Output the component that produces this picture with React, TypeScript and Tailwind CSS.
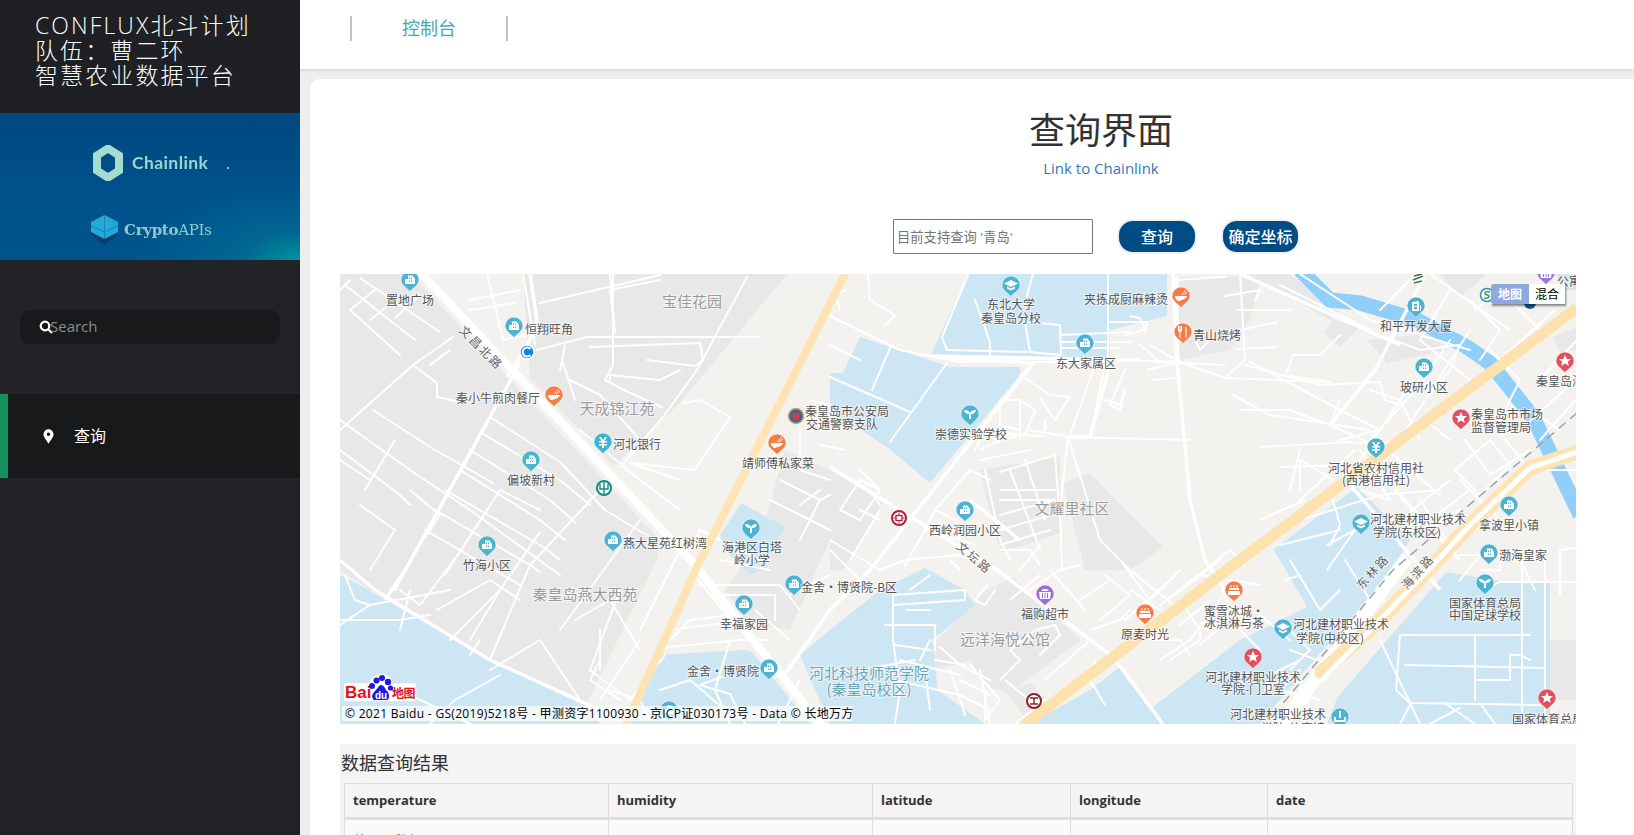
import React from "react";

const CJK = '"Open Sans","Noto Sans CJK SC",sans-serif';

const blocks: string[] = [
  "340,274 415,274 660,540 657,560 587,703 490,658 370,590 340,570",
  "523,274 787,274 680,403 613,467 530,380",
  "1177,277 1260,277 1250,320 1230,350 1180,360",
  "980,470 1060,457 1060,533 1000,553",
  "1063,483 1090,473 1163,547 1130,570 1085,570",
  "830,470 883,503 843,570 830,570",
  "785,450 830,470 830,540 790,630 735,620 725,590 760,540",
  "937,670 930,647 987,590 1013,577 1080,640 1010,693 987,687 970,660",
  "1007,693 1030,682 1047,703 1027,720",
  "1440,274 1487,274 1460,297",
  "1367,340 1433,333 1447,350 1387,363",
  "1323,333 1333,320 1360,327 1340,347",
  "1553,337 1577,327 1577,350 1560,353",
  "1247,274 1290,274 1340,312 1330,320",
  "1490,600 1530,595 1530,610 1490,612",
  "1550,640 1576,640 1576,700 1550,700",
];

const water: string[] = [
  "340,575 360,585 490,660 590,708 600,724 340,724",
  "630,724 658,655 745,650 770,655 800,690 825,724",
  "800,655 830,630 880,590 925,568 965,590 975,605 932,640 938,690 985,724 830,724",
  "968,274 1167,274 1167,316 1110,330 1110,360 1030,358 930,357",
  "860,337 950,367 1020,367 1020,375 930,483 887,447 830,410 830,373 843,373",
  "720,535 741,503 785,527 760,570 750,575 725,550",
  "1030,724 1090,690 1120,667 1160,724",
  "1273,550 1357,487 1410,540 1380,590 1320,680 1260,724 1130,724 1153,707 1240,640 1307,607 1280,560",
  "1433,570 1513,583 1550,583 1550,724 1327,724 1353,657",
  "1557,274 1577,274 1577,290 1560,290",
];

const thin: string[] = [
  "968,275 942,337 947,350 1027,352", "1033,274 1025,303", "1110,322 1147,322 1145,333", "890,348 872,390", "947,363 890,442", "830,377 910,412",
  "453,337 413,365 340,430", "413,365 437,383 437,397 460,402", "340,420 410,470 470,510 560,575",
  "373,410 430,447 493,483", "340,450 400,495 410,505", "345,285 415,340", "360,278 440,332", "375,290 350,310 400,355",
  "395,300 370,320", "420,295 395,318", "450,350 430,365",
  "490,417 560,462 605,510 655,540", "480,432 560,480 590,505", "470,450 550,500 575,522", "460,470 540,520 565,540", "445,490 545,548 560,560",
  "435,510 530,565 540,572", "425,530 520,585", "580,430 640,480 680,510",
  "410,490 440,515 420,545 395,590", "395,440 365,490", "360,505 395,530 370,570", "340,460 370,480",
  "465,545 420,605 400,590", "540,532 500,590 450,640", "600,490 530,565 490,660", "640,520 560,630",
  "523,274 535,345", "470,300 520,290", "470,310 515,303", "487,274 503,340 537,333", "540,303 660,275",
  "537,350 587,337 760,337", "610,274 615,332 610,290 660,280", "613,274 613,365 605,380 630,393 662,407",
  "590,347 700,343 703,360 695,366 647,360", "747,277 697,370 663,417 620,467",
  "683,403 700,400 730,417 695,470 630,463 680,480", "610,380 610,375 660,380 680,370", "560,370 565,345", "575,400 562,360",
  "340,290 350,280", "570,380 600,395 640,440",
  "830,316 900,350 960,362 1110,362", "860,360 830,345",
  "868,274 870,300 895,315 885,325", "980,360 990,360 990,342 975,300",
  "840,310 835,295 845,290", "1030,322 1060,325 1061,355 1030,352 1025,322 1030,322",
  "1061,335 1130,332", "1061,342 1130,342", "1061,348 1120,348", "1108,274 1108,360", "1130,316 1140,318 1145,330 1125,335",
  "1147,370 1180,362 1150,345", "1110,360 1180,362 1225,378 1330,382 1290,376",
  "1180,362 1175,350", "1153,380 1175,378", "1095,365 1070,435", "1105,365 1090,437", "1125,370 1110,405 1120,410 1125,390 1120,405 1105,400",
  "1020,375 1050,395 1070,397 1055,420 1040,398", "1030,430 1070,437 1190,440", "1045,430 1045,420", "1000,435 1045,436",
  "1068,437 1100,540 1130,570", "1068,437 1060,510 1062,570",
  "1000,472 1055,455", "1000,490 1055,490", "1000,500 1055,500", "1000,515 1055,500", "1000,530 1050,515", "1000,545 1050,530",
  "1010,470 1040,550", "1025,460 1045,520", "1055,455 1060,520", "985,470 1000,540 1010,560", "990,480 970,470 935,510 925,530 975,545",
  "1240,274 1245,360 1225,378", "1175,280 1225,277", "1225,296 1260,290", "1255,300 1260,290", "1237,310 1290,310", "1240,330 1277,322",
  "1237,349 1277,347", "1195,340 1200,350 1210,340", "1140,345 1160,362 1225,365",
  "1245,365 1320,385 1380,382 1385,400 1400,405 1430,380", "1287,372 1293,355 1320,355 1340,335", "1250,362 1340,410 1380,430",
  "1233,395 1270,415 1370,430", "1240,410 1290,410 1330,425 1390,452 1440,495", "1355,450 1300,500",
  "1330,425 1340,400", "1340,440 1380,430", "1280,545 1340,530", "1390,455 1425,400 1470,330", "1370,440 1420,385 1450,340", "1360,460 1410,385",
  "1260,447 1350,442 1380,445 1392,440", "1290,490 1300,450", "1300,490 1300,460 1333,480", "1360,450 1390,500 1360,490", "1280,467 1350,465",
  "1300,520 1380,495 1440,490", "1330,490 1340,525 1330,545", "1327,545 1355,530 1327,570", "1305,500 1260,520",
  "1300,274 1370,320 1470,350", "1280,285 1370,330", "1380,310 1420,270", "1430,274 1510,330", "1450,290 1420,340 1470,380", "1470,300 1500,330 1480,360",
  "1510,300 1540,330", "1475,310 1500,290 1530,320", "1555,310 1500,360", "1380,335 1420,350 1460,345 1450,370 1430,395", "1490,350 1520,380 1500,420",
  "1370,390 1400,400 1420,440", "1425,420 1450,440", "1440,410 1410,440",
  "1465,440 1490,475 1530,450", "1490,440 1510,465 1480,495 1455,470 1490,440", "1500,433 1530,470", "1520,430 1570,385", "1580,395 1540,440",
  "1540,380 1577,340", "1530,410 1560,430", "1460,480 1500,520", "1420,500 1450,545", "1450,480 1400,520", "1490,520 1430,560", "1470,490 1430,520",
  "1420,530 1460,510", "1580,470 1540,470",
  "1500,550 1500,570 1480,570", "1460,580 1480,555 1460,555", "1520,560 1535,590", "1545,560 1545,590", "1560,550 1560,595", "1560,550 1576,548",
  "1480,590 1500,582 1576,582", "1522,555 1522,724", "1545,582 1545,724", "1402,635 1530,635", "1400,635 1396,690 1410,703 1540,705", "1475,635 1475,700",
  "1405,665 1545,668", "1530,660 1520,655 1510,655 1510,680 1475,680", "1410,705 1400,724", "1445,703 1475,724", "1480,703 1495,724", "1460,708 1430,724",
  "1345,560 1370,600 1385,600", "1290,560 1320,610 1340,590", "1300,640 1330,620 1340,625", "1290,650 1330,665", "1380,640 1420,724", "1290,630 1310,650 1290,670",
  "1300,660 1270,675 1265,690", "1265,690 1300,670", "1320,700 1280,690 1300,670", "1260,615 1290,640", "1290,675 1310,700 1280,724",
  "1195,580 1220,560", "1175,595 1200,575 1260,585", "1160,605 1230,550 1245,565", "1125,620 1170,580", "1160,660 1190,640 1220,600", "1200,645 1240,610",
  "1180,600 1200,630 1200,640 1170,660", "1222,590 1240,630 1260,650", "1285,580 1300,575",
  "1030,590 1060,570 1080,565", "1010,600 1040,575", "1110,580 1080,600", "1105,575 1130,595 1100,620", "1120,560 1150,600 1180,570", "1085,610 1050,570",
  "1160,610 1130,590", "1180,625 1210,600", "1130,570 1180,610", "1150,640 1180,640 1190,655", "1045,680 1090,640", "1090,630 1120,620 1130,610",
  "1000,680 1020,660 1010,650 1035,630 1055,625 1060,635 1040,655", "987,585 975,600 985,605 995,590", "970,665 1000,700 985,720 985,690 990,695 960,680",
  "940,647 960,665 990,680", "1005,680 1035,705", "1045,700 1015,724", "1095,660 1090,680 1105,705",
  "893,595 965,590 965,600 893,605", "893,595 893,640 900,690 895,724", "907,610 930,610", "885,625 935,625 935,650", "895,645 930,650", "935,660 965,665", "910,590 930,575",
  "895,680 960,695 990,710", "950,670 965,715", "925,670 930,710", "900,660 960,675", "980,670 990,724", "860,670 915,660",
  "778,724 800,680", "660,690 690,680 725,710", "700,685 730,694 745,724", "700,685 722,677", "730,640 715,690 730,724", "660,648 740,640 770,640",
  "670,640 690,620 730,615 745,630", "670,630 750,620", "700,585 780,585 800,610", "710,595 775,595 775,620", "755,610 790,640", "720,560 770,570", "690,550 700,530 720,540",
  "730,565 740,550 760,560 770,560", "790,595 830,575",
  "800,470 830,480", "780,480 820,500 830,495", "770,500 830,530", "810,400 830,405", "770,440 780,470", "800,430 800,470", "820,445 845,450", "800,505 820,490", "820,500 800,540",
  "830,540 880,570 905,560", "830,550 860,580", "860,470 880,490 860,520 840,510 860,480 880,490", "860,510 880,520", "850,560 880,510", "880,505 870,490",
  "905,565 925,530 935,510 955,520 960,540", "905,560 960,555 1000,570", "960,570 950,560", "1000,550 1030,550 1040,565", "1020,570 1040,545",
  "1000,440 1025,435 1035,410 1020,400 1000,400 1000,425 1020,430", "1045,436 985,432", "1020,440 1020,400", "985,430 975,450", "1000,440 980,450", "980,460 1030,450",
  "920,660 930,640", "690,570 735,625", "680,550 640,630", "620,590 590,670", "470,640 500,590", "490,670 540,640 580,700", "600,630 600,670", "575,620 610,600 640,650",
  "610,690 640,700 650,720", "600,660 590,680 620,700", "590,670 630,700 665,655", "640,640 600,700",
  "340,620 400,620 430,615", "345,575 355,600 370,605", "450,590 370,605 340,625", "500,675 455,700 430,724", "410,695 470,724",
  "410,590 400,630", "437,610 490,580 520,600", "445,575 500,490 540,510", "470,655 480,640",
];

const medium: string[] = [
  "520,363 490,417 407,567 385,600", "530,274 537,320 527,347 507,377", "1033,363 870,570 830,610 783,677", "1033,363 950,358",
  "830,467 997,570 1113,657 1163,724", "1111,362 1090,437 1065,437", "1177,277 1177,360 1190,500 1205,560 1225,590", "1173,274 1177,365", "1240,274 1400,345", "930,356 1140,360",
  "340,560 375,590 490,660 600,710", "970,500 1020,540", "1395,490 1460,560", "1420,285 1375,370 1330,425", "1352,487 1440,590",
];

const labels: [string, number, number, number?, string?][] = [
  ["置地广场", 410, 299], ["恒翔旺角", 549, 328], ["秦小牛煎肉餐厅", 498, 397], ["宝佳花园", 692, 300, 15, "#9a9a9a"], ["天成锦江苑", 617, 407, 15, "#9a9a9a"],
  ["河北银行", 637, 443], ["偏坡新村", 531, 479], ["燕大星苑红树湾", 665, 542], ["竹海小区", 487, 564], ["海港区白塔", 752, 546], ["岭小学", 752, 559], ["靖师傅私家菜", 778, 462],
  ["秦皇岛市公安局", 847, 410], ["交通警察支队", 842, 423], ["崇德实验学校", 971, 433], ["东北大学", 1011, 303], ["秦皇岛分校", 1011, 317], ["夹拣成厨麻辣烫", 1126, 298],
  ["青山烧烤", 1217, 334], ["东大家属区", 1086, 362], ["文耀里社区", 1072, 507, 15, "#9a9a9a"], ["西岭润园小区", 965, 529], ["和平开发大厦", 1416, 325], ["玻研小区", 1424, 386],
  ["秦皇岛海港", 1566, 380], ["秦皇岛市市场", 1507, 413], ["监督管理局", 1501, 426], ["河北省农村信用社", 1376, 467], ["(西港信用社)", 1376, 479], ["河北建材职业技术", 1418, 518],
  ["学院(东校区)", 1407, 531], ["拿波里小镇", 1509, 524], ["渤海皇家", 1523, 554], ["公寓", 1569, 280], ["国家体育总局", 1485, 602], ["中国足球学校", 1485, 614],
  ["河北建材职业技术", 1341, 623], ["学院(中校区)", 1330, 637], ["蜜雪冰城·", 1234, 610], ["冰淇淋与茶", 1234, 622], ["原麦时光", 1145, 633], ["福购超市", 1045, 613],
  ["远洋海悦公馆", 1005, 638, 15, "#9a9a9a"], ["河北科技师范学院", 869, 672, 15, "#6aa6b6"], ["(秦皇岛校区)", 869, 688, 15, "#6aa6b6"], ["金舍·博贤院-B区", 849, 586], ["幸福家园", 744, 623],
  ["金舍·博贤院", 723, 670], ["秦皇岛燕大西苑", 585, 593, 15, "#9a9a9a"], ["河北建材职业技术", 1253, 676], ["学院-门卫室", 1253, 688], ["河北建材职业技术", 1278, 713], ["学院-体育馆", 1293, 727],
  ["国家体育总局", 1548, 718],
];

const roadLabels: [string, number, number, number][] = [
  ["文昌北路", 482, 347, 45], ["文坛路", 975, 557, 40], ["东林路", 1372, 571, -48], ["海滨路", 1417, 571, -48],
];

type Kind = "b" | "food" | "yen" | "tree" | "cap" | "star" | "fork" | "cake" | "shop" | "sport" | "office";
const teal = "#4cb4d0";
const orange = "#f47c45";
const red = "#e2505f";
const pins: [number, number, string, Kind][] = [
  [410, 280, teal, "b"], [514, 326, teal, "b"], [554, 395, orange, "food"], [603, 442, "#3fb2cf", "yen"], [531, 460, teal, "b"], [613, 540, teal, "b"], [487, 545, teal, "b"], [751, 528, teal, "tree"],
  [777, 443, orange, "food"], [1011, 285, teal, "cap"], [1181, 296, orange, "food"], [1183, 332, orange, "fork"], [1085, 343, teal, "b"], [970, 414, teal, "tree"], [965, 510, teal, "b"],
  [1416, 306, teal, "office"], [1424, 367, teal, "b"], [1546, 273, "#9b78e0", "shop"], [1565, 361, red, "star"], [1461, 418, red, "star"], [1376, 447, teal, "yen"], [1361, 523, teal, "cap"],
  [1509, 505, teal, "b"], [1489, 553, teal, "b"], [1485, 583, teal, "tree"], [1253, 657, red, "star"], [1234, 590, orange, "cake"], [1283, 628, teal, "cap"], [1340, 717, teal, "sport"],
  [1547, 698, red, "star"], [1045, 594, "#a269dc", "shop"], [1145, 613, orange, "cake"], [794, 584, teal, "b"], [744, 604, teal, "b"], [769, 668, teal, "b"], [669, 710, teal, "b"],
];

function PinIcon({ kind }: { kind: Kind }) {
  const w = { fill: "#fff" };
  switch (kind) {
    case "b":
      return <path d="M-5 4V-1L-2-1V-4.5H2.5L5-1V4ZM-1-2.5H0V-1H-1ZM1-2.5H2V-1H1ZM-1 .5H0V2H-1ZM1 .5H2V2H1Z" fillRule="evenodd" {...w} />;
    case "office":
      return <path d="M-4 5V-4L3-5V5ZM4 5V-1H5V5ZM-2-2V0H1V-2ZM-2 1V3H1V1Z" fillRule="evenodd" {...w} />;
    case "food":
      return (
        <>
          <path d="M-6 0H6C6 3-2 5-3 5C-4 4-6 3-6 0Z" {...w} />
          <path d="M0-1L5-6M2-1L6-4" stroke="#fff" strokeWidth="1" />
        </>
      );
    case "yen":
      return <path d="M-4-5H-2L0-2L2-5H4L1.5-1H4V.5H1V2H4V3.5H1V6H-1V3.5H-4V2H-1V.5H-4V-1H-1.5Z" {...w} />;
    case "tree":
      return <path d="M-1 5V0C-4 0-6-2-6-4C-3-4-1-3 0-1C1-3 3-4 6-4C6-2 4 0 1 0V5Z" {...w} />;
    case "cap":
      return <path d="M0-5L7-1.5L0 2L-7-1.5ZM-4 1.5L0 3.5L4 1.5V3.5L0 5.5L-4 3.5Z" {...w} />;
    case "star":
      return <path d="M0-6L1.8-2H6L2.8 .8L3.8 5L0 2.6L-3.8 5L-2.8 .8L-6-2H-1.8Z" {...w} />;
    case "fork":
      return <path d="M-5-6V-2C-5-.5-4 0-3.5 0V6H-2.5V0C-2 0-1-.5-1-2V-6H-2V-2.5H-2.5V-6H-3.5V-2.5H-4V-6ZM2-6C4-5 4-1 3.5 0V6H2.5V-6Z" {...w} />;
    case "cake":
      return <path d="M-6 5V1H6V5ZM-5 0V-2H5V0ZM-3.5-2.5V-5H-2.5V-2.5ZM-.5-2.5V-5H.5V-2.5ZM2.5-2.5V-5H3.5V-2.5Z" {...w} />;
    case "shop":
      return <path d="M-6-2H6L5 5H-5ZM-3-1V4H-2V-1ZM-.5-1V4H.5V-1ZM2-1V4H3V-1ZM-4-3L-2-5H2L4-3Z" fillRule="evenodd" {...w} />;
    case "sport":
      return <path d="M-1-6H1V1H-1ZM-6 0H-4V3H4V0H6V5H-6Z" {...w} />;
  }
}

function Pin({ x, y, color, kind }: { x: number; y: number; color: string; kind: Kind }) {
  return (
    <g transform={`translate(${x} ${y})`}>
      <path d="M-9 0A9 9 0 1 1 9 0C9 5 3 8 0 11.5C-3 8-9 5-9 0Z" fill={color} stroke="#fff" strokeOpacity=".55" strokeWidth="1" />
      <PinIcon kind={kind} />
    </g>
  );
}

function MapDrawing() {
  return (
    <svg viewBox="340 274 1236 450" width="1236" height="450" className="block" style={{ fontFamily: '"Noto Sans CJK SC",sans-serif' }}>
      <rect x="340" y="274" width="1236" height="450" fill="#f3f2ef" />
      {blocks.map((p) => (
        <polygon key={p} points={p} fill="#e8e8e8" />
      ))}
      {water.map((p) => (
        <polygon key={p} points={p} fill="#cde6f4" />
      ))}
      <polyline points="420,272 697,567 745,630 822,726" fill="none" stroke="#f3f2ef" strokeWidth="16" />
      <polyline points="1433,555 1285,726" fill="none" stroke="#f3f2ef" strokeWidth="42" />
      <polyline points="1300,270 1330,300 1360,303 1417,320 1467,347 1490,363 1533,417 1580,515" fill="none" stroke="#8fcffa" strokeWidth="15" />
      {thin.map((p, i) => (
        <polyline key={i} points={p} fill="none" stroke="#fff" strokeWidth="2" strokeLinejoin="round" strokeLinecap="round" />
      ))}
      {medium.map((p, i) => (
        <polyline key={i} points={p} fill="none" stroke="#fff" strokeWidth="3.5" strokeLinejoin="round" />
      ))}
      <polyline points="420,272 697,567 745,630 822,726" fill="none" stroke="#fff" strokeWidth="8" />
      <polyline points="1407,558 1280,726" fill="none" stroke="#fff" strokeWidth="13" />
      <polyline points="1577,413 1393,570 1280,707" fill="none" stroke="#9d9d9d" strokeWidth="1.4" strokeDasharray="9 6" />
      <polyline points="848,268 697,567 625,727" fill="none" stroke="#fee4b5" strokeWidth="8" />
      <polyline points="1577,308 1227,570 1023,726" fill="none" stroke="#fee2ae" strokeWidth="11" />
      <polyline points="1577,452 1530,468 1470,525 1433,565 1380,620 1322,672" fill="none" stroke="#fee4b5" strokeWidth="15" strokeLinecap="round" />
      <polyline points="1577,452 1530,468 1470,525 1433,565 1380,620 1322,680" fill="none" stroke="#fff" strokeWidth="5" />
      {pins.map(([x, y, c, k], i) => (
        <Pin key={i} x={x} y={y} color={c} kind={k} />
      ))}
      <g>
        <circle cx="527" cy="352" r="7" fill="#0b86dc" stroke="#fff" strokeWidth="1.5" />
        <path d="M530.500 349A4.500 4.500 0 1 0 530.500 355" fill="none" stroke="#fff" strokeWidth="2" />
        <circle cx="604" cy="488" r="7" fill="#fff" stroke="#0f8d80" strokeWidth="2" />
        <path d="M604 482V494M600 484V489H608V484" stroke="#0f8d80" strokeWidth="1.4" fill="none" />
        <circle cx="796" cy="416" r="7.5" fill="#3668a6" stroke="#d6a552" strokeWidth="1.5" />
        <circle cx="796" cy="416" r="3.500" fill="#d83c2f" />
        <circle cx="899" cy="518" r="7" fill="#fff" stroke="#b11e3c" strokeWidth="2" />
        <path d="M893.500 518H904.500M899 512.500V523.500" stroke="#b11e3c" strokeWidth="1" />
        <rect x="896" y="515.500" width="6" height="5" fill="#fff" stroke="#b11e3c" strokeWidth="1.3" />
        <circle cx="1034" cy="701" r="7" fill="#fff" stroke="#8c1f26" strokeWidth="2" />
        <path d="M1030 698H1038M1034 698V704M1030 704H1038" stroke="#8c1f26" strokeWidth="1.4" />
        <circle cx="1418" cy="278" r="7" fill="#fff" />
        <path d="M1413 280L1423 276M1414 276L1422 274M1414 283L1422 281" stroke="#3c7d53" strokeWidth="1.8" />
        <circle cx="1487" cy="295" r="6.500" fill="#fff" stroke="#2f8ecb" strokeWidth="1.5" />
        <path d="M1490 292C1484 290 1484 295 1487 295C1490 295 1490 299 1484 298" fill="none" stroke="#37a05c" strokeWidth="1.6" />
        <circle cx="1530" cy="303" r="6" fill="#0d5c9e" />
      </g>
      {labels.map(([t, x, y, s, c], i) => (
        <text key={i} x={x} y={y} textAnchor="middle" dominantBaseline="central" fontSize={s ?? 12} fill={c ?? "#555"} stroke="#fff" strokeOpacity=".6" strokeWidth="2" paintOrder="stroke">
          {t}
        </text>
      ))}
      {roadLabels.map(([t, x, y, r], i) => (
        <text key={i} x={x} y={y} textAnchor="middle" dominantBaseline="central" fontSize={12} letterSpacing="2" fill="#666" stroke="#fff" strokeOpacity=".7" strokeWidth="2" paintOrder="stroke" transform={`rotate(${r} ${x} ${y})`}>
          {t}
        </text>
      ))}
    </svg>
  );
}

function BaiduLogo() {
  return (
    <svg viewBox="0 0 74 28" width="74" height="28" className="block">
      <rect x="0.5" y="9" width="73" height="18.5" rx="2" fill="#fff" stroke="#ddd" strokeWidth=".5" />
      <circle cx="38" cy="12" r="12" fill="#fff" />
      <text x="2" y="24" fontSize="17" fontWeight="700" fill="#e2121b" fontFamily='"Liberation Sans",sans-serif'>Bai</text>
      <g fill="#2319dc">
        <circle cx="33.500" cy="6.500" r="3" />
        <circle cx="39" cy="4" r="3" />
        <circle cx="45" cy="8" r="3.200" />
        <circle cx="29" cy="12" r="3" />
        <circle cx="47.500" cy="14" r="2.600" />
        <path d="M30 25C27 20 33 17 36 12C39 9 42 13 43 16C47 19 47 25 44 26H33C31 26 30 26 30 25Z" />
      </g>
      <text x="32" y="25" fontSize="10" fontWeight="700" fill="#fff" fontFamily='"Liberation Sans",sans-serif'>du</text>
      <text x="49" y="23.500" fontSize="12" fontWeight="700" fill="#e2121b" fontFamily='"Noto Sans CJK SC",sans-serif' letterSpacing="-.5">地图</text>
    </svg>
  );
}

function Banner() {
  return (
    <div className="h-[147px] relative overflow-hidden bg-[radial-gradient(ellipse_at_100%_100%,#00939e_0%,rgba(0,120,150,0.5)_14%,rgba(0,90,140,0)_38%),linear-gradient(180deg,#00487f_0%,#00528d_60%,#00558e_100%)]">
      <div className="flex items-center pl-[93px] pt-[32px] blur-[0.4px]">
        <svg viewBox="0 0 30 36" width="30" height="36">
          <path d="M15 3.500L26 10.500V25.500L15 32.500L4 25.500V10.500Z" fill="none" stroke="#a4dccf" strokeWidth="8" />
        </svg>
        <span className="ml-[9px] text-[17.500px] font-bold text-[#9bd5cb] font-['Lato',sans-serif] tracking-[0.4px]">Chainlink</span>
        <span className="ml-[18px] mt-[4px] text-[#9bd5cb] text-[13px] font-bold">.</span>
      </div>
      <div className="flex items-center pl-[91px] mt-[34px] blur-[0.4px]">
        <svg viewBox="0 0 27 30" width="27" height="30">
          <path d="M0 17L13.500 24L27 17V20L13.500 30L0 20Z" fill="#0b3f70" />
          <path d="M13.500 0L27 7V17L13.500 24L0 17V7Z" fill="#22a9d6" />
          <path d="M13.500 0V24M0 11L13.500 17L27 11" stroke="#1287b8" fill="none" />
        </svg>
        <span className="ml-[6px] text-[15px] text-[#8fc8c9] font-['DejaVu_Serif',serif] font-bold tracking-[-0.3px]">
          Crypto<span className="font-normal">APIs</span>
        </span>
      </div>
    </div>
  );
}

export default function App() {
  const cols = [264, 264, 198, 197, 305];
  const heads = ["temperature", "humidity", "latitude", "longitude", "date"];
  return (
    <div className="flex h-[835px] w-[1634px] overflow-hidden bg-[#eeeeee]" style={{ fontFamily: CJK }}>
      <aside className="w-[300px] shrink-0 flex flex-col bg-[#212327]">
        <div className="h-[113px] pt-[13px] pl-[35px] bg-[#1f2024] text-white text-[23px] leading-[25px] tracking-[2.100px] font-light">
          <div>CONFLUX北斗计划</div>
          <div>队伍：曹二环</div>
          <div>智慧农业数据平台</div>
        </div>
        <Banner />
        <div className="mt-[50px] mx-[20px] h-[34px] rounded-[10px] bg-[#18191b] flex items-center pl-[19px]">
          <svg viewBox="0 0 14 14" width="14" height="14" className="shrink-0">
            <circle cx="6" cy="6" r="4.300" fill="none" stroke="#fff" strokeWidth="2.200" />
            <path d="M9 9L13 13" stroke="#fff" strokeWidth="2.200" />
          </svg>
          <span className="-ml-[3px] -mt-[1px] text-[15px] text-[#8c8c8c]">Search</span>
        </div>
        <div className="mt-[50px] h-[84px] bg-[#18191b] border-l-[8px] border-[#15915f] flex items-center pl-[35px]">
          <svg viewBox="0 0 12 16" width="11" height="15" className="shrink-0">
            <path d="M6 0A5.500 5.500 0 0 0 .5 5.500C.5 9 4 12 6 16C8 12 11.500 9 11.500 5.500A5.500 5.500 0 0 0 6 0ZM6 7.500A2 2 0 1 1 6 3.500A2 2 0 0 1 6 7.500Z" fill="#fff" fillRule="evenodd" />
          </svg>
          <span className="ml-[20px] text-[16px] text-white">查询</span>
        </div>
      </aside>

      <main className="flex-1 flex flex-col min-w-0">
        <header className="h-[69px] shrink-0 bg-white shadow-[0_1px_3px_rgba(0,0,0,0.12)] pl-[50px] pt-[16px] relative">
          <div className="w-[158px] h-[25px] border-x-2 border-[#c4c4c4] flex items-center justify-center text-[18px] text-[#43a7b8]">控制台</div>
        </header>
        <section className="mt-[10px] ml-[10px] flex-1 min-h-0 rounded-tl-[10px] bg-white pl-[30px] overflow-hidden">
          <div className="w-[1236px]">
            <div className="pl-[286px] pt-[32px] text-center">
              <h1 className="text-[36px] leading-[40px] text-[#333333]">查询界面</h1>
              <a className="block mt-[7px] text-[15px] leading-[20px] text-[#337ab7]">Link to Chainlink</a>
            </div>
            <div className="mt-[41px] ml-[553px] flex items-center">
              <input readOnly placeholder="目前支持查询 '青岛'" className="w-[200px] h-[35px] border border-[#767676] bg-white rounded-[1px] pl-[3px] text-[13.300px] placeholder:text-[#757575] outline-none" />
              <button className="ml-[24px] w-[80px] h-[35px] rounded-[16px] bg-[#004c84] border-2 border-[#eef1f4] text-white text-[16px] font-medium">查询</button>
              <button className="ml-[24px] w-[79px] h-[35px] rounded-[16px] bg-[#004c84] border-2 border-[#eef1f4] text-white text-[16px] font-medium whitespace-nowrap">确定坐标</button>
            </div>
            <div className="mt-[20px] h-[450px] relative overflow-hidden">
              <MapDrawing />
              <div className="absolute right-[11px] top-[10px] h-[20px] w-[74px] flex text-[12px] leading-[20px] shadow-[1px_2px_2px_rgba(0,0,0,0.45)]" style={{ fontFamily: '"Noto Sans CJK SC",sans-serif' }}>
                <span className="w-[38px] bg-[#8ea8e0] text-white font-bold text-center rounded-l-[3px]">地图</span>
                <span className="w-[36px] bg-white text-black text-center">混合</span>
              </div>
              <div className="absolute left-[3px] bottom-[22px]">
                <BaiduLogo />
              </div>
              <div className="absolute left-[2px] bottom-[3px] h-[15px] w-[510px] bg-white/70 pl-[3px] text-[12px] leading-[15px] tracking-[0.3px] text-black whitespace-nowrap" style={{ fontFamily: CJK }}>
                © 2021 Baidu - GS(2019)5218号 - 甲测资字1100930 - 京ICP证030173号 - Data © 长地万方
              </div>
            </div>
            <div className="mt-[20px] bg-[#f4f4f4] px-[4px]">
              <h2 className="h-[39px] -ml-[3px] text-[18px] leading-[39px] text-[#333333]">数据查询结果</h2>
              <table className="w-full table-fixed border-collapse text-[14px] text-[#333333]">
                <colgroup>
                  {cols.map((w, i) => (
                    <col key={i} style={{ width: w }} />
                  ))}
                </colgroup>
                <thead>
                  <tr className="h-[35px]">
                    {heads.map((h) => (
                      <th key={h} className="border border-[#dddddd] border-b-[3px] px-[8px] text-left text-[13px] font-bold">{h}</th>
                    ))}
                  </tr>
                </thead>
                <tbody>
                  <tr>
                    <td className="border border-[#dddddd] bg-[#f9f9f9] px-[8px] pt-[10px] pb-[8px]">待写入数据</td>
                    <td className="border border-[#dddddd] bg-[#f9f9f9]"></td>
                    <td className="border border-[#dddddd] bg-[#f9f9f9]"></td>
                    <td className="border border-[#dddddd] bg-[#f9f9f9]"></td>
                    <td className="border border-[#dddddd] bg-[#f9f9f9]"></td>
                  </tr>
                </tbody>
              </table>
            </div>
          </div>
        </section>
      </main>
    </div>
  );
}
